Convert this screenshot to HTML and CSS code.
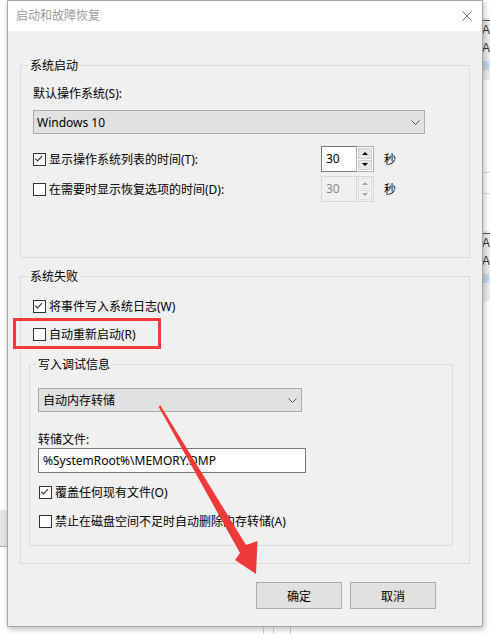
FILE: index.html
```html
<!DOCTYPE html>
<html>
<head>
  <meta charset="UTF-8">
  <title>启动和故障恢复</title>
  <link rel="stylesheet" href="styles.css">
</head>
<body>

<div class="desktop">

  <!-- 左側：背後視窗的一角 -->
  <div class="side-left">
    <div class="left-bar"></div>
  </div>

  <div class="center">
    <div class="dialog">
      <div class="titlebar">
        <span class="title">启动和故障恢复</span>
        <svg class="close" viewBox="0 0 10 10" width="10" height="10">
          <path d="M0.5 0.5 L9.5 9.5 M9.5 0.5 L0.5 9.5" stroke="#6b6b6b" stroke-width="1" fill="none"/>
        </svg>
      </div>

      <div class="dialog-body">

        <!-- 系统启动 -->
        <fieldset class="group group-boot">
          <legend>系统启动</legend>
          <div class="field-label">默认操作系统(S):</div>
          <div class="select select-os">
            <span>Windows 10</span>
            <svg class="chevron" viewBox="0 0 9 5" width="9" height="5"><path d="M0.5 0.5 L4.5 4.5 L8.5 0.5" stroke="#555" fill="none"/></svg>
          </div>

          <div class="timer-row first">
            <label class="check"><span class="box checked"><svg viewBox="0 0 13 13" width="11" height="11"><path d="M1.5 5.5 L4.2 8.2 L9.5 2.5" stroke="#333" stroke-width="1.3" fill="none"/></svg></span>显示操作系统列表的时间(T):</label>
            <div class="spin">
              <span class="spin-value">30</span>
              <span class="spin-btns">
                <span class="spin-btn"><i class="arrow-up"></i></span>
                <span class="spin-btn"><i class="arrow-down"></i></span>
              </span>
            </div>
            <span class="unit">秒</span>
          </div>

          <div class="timer-row">
            <label class="check"><span class="box"></span>在需要时显示恢复选项的时间(D):</label>
            <div class="spin disabled">
              <span class="spin-value">30</span>
              <span class="spin-btns">
                <span class="spin-btn"><i class="arrow-up"></i></span>
                <span class="spin-btn"><i class="arrow-down"></i></span>
              </span>
            </div>
            <span class="unit">秒</span>
          </div>
        </fieldset>

        <!-- 系统失败 -->
        <fieldset class="group group-fail">
          <legend>系统失败</legend>
          <label class="check row-log"><span class="box checked"><svg viewBox="0 0 13 13" width="11" height="11"><path d="M1.5 5.5 L4.2 8.2 L9.5 2.5" stroke="#333" stroke-width="1.3" fill="none"/></svg></span>将事件写入系统日志(W)</label>
          <label class="check row-restart"><span class="box"></span>自动重新启动(R)</label>

          <fieldset class="group group-debug">
            <legend>写入调试信息</legend>
            <div class="select select-dump">
              <span>自动内存转储</span>
              <svg class="chevron" viewBox="0 0 9 5" width="9" height="5"><path d="M0.5 0.5 L4.5 4.5 L8.5 0.5" stroke="#555" fill="none"/></svg>
            </div>
            <div class="field-label dump-label">转储文件:</div>
            <div class="textbox">%SystemRoot%\MEMORY.DMP</div>
            <label class="check row-overwrite"><span class="box checked"><svg viewBox="0 0 13 13" width="11" height="11"><path d="M1.5 5.5 L4.2 8.2 L9.5 2.5" stroke="#333" stroke-width="1.3" fill="none"/></svg></span>覆盖任何现有文件(O)</label>
            <label class="check row-lowdisk"><span class="box"></span>禁止在磁盘空间不足时自动删除内存转储(A)</label>
          </fieldset>
        </fieldset>

        <div class="buttons">
          <button class="btn">确定</button>
          <button class="btn">取消</button>
        </div>
      </div>
    </div>

    <!-- 對話框下方露出的背景 -->
    <div class="under">
      <span class="vline"></span>
      <span class="vline pink"></span>
      <span class="vline"></span>
    </div>
  </div>

  <!-- 右側：背後視窗的工具列 -->
  <div class="side-right">
    <div class="tool-strip">
      <span class="glyph boxed">A</span>
      <span class="glyph">A</span>
      <span class="glyph-icon"></span>
    </div>
    <div class="hline line-a"></div>
    <div class="hline line-b"></div>
    <div class="tool-strip second">
      <span class="glyph boxed">A</span>
      <span class="glyph">A</span>
      <span class="glyph-icon"></span>
    </div>
  </div>

  <!-- 標註：紅框與箭頭 -->
  <div class="mark-box"></div>
  <svg class="mark-arrow" viewBox="0 0 490 634" width="490" height="634">
    <polygon points="158.5,406.5 160.5,405.5 246,545 257.5,541 256,574 235,560 240,553" fill="#ef3a3a"/>
  </svg>

</div>

</body>
</html>
```

FILE: styles.css
```css
body {
  margin: 0;
  font-family: "Noto Sans", "Noto Sans CJK SC", sans-serif;
  font-size: 12px;
  color: #000;
  background: #fff;
}

.desktop {
  position: relative;
  display: flex;
  width: 490px;
  height: 634px;
  overflow: hidden;
  background: #fff;
}

/* 背景 */
.side-left {
  width: 7px;
  flex: none;
}
.left-bar {
  margin-top: 510px;
  height: 36px;
  background: #e6e6e6;
  border-bottom: 1px solid #b0b0b0;
}
.side-right {
  width: 7px;
  flex: none;
  padding-top: 18px;
}
.tool-strip {
  height: 62px;
  background: #ececec;
  display: flex;
  flex-direction: column;
  padding-top: 2px;
  box-sizing: border-box;
}
.tool-strip.second {
  margin-top: 37px;
  height: 70px;
}
.glyph {
  font-family: "Liberation Sans", sans-serif;
  font-size: 12px;
  line-height: 18px;
  height: 18px;
  color: #333;
  margin-left: -1px;
}
.glyph.boxed {
  border-top: 1px solid #555;
}
.glyph-icon {
  margin-top: 4px;
  width: 6px;
  height: 9px;
  background: #c6d6ea;
}
.hline {
  height: 1px;
  background: #d9d9d9;
}
.line-a {
  margin-top: 92px;
}
.line-b {
  margin-top: 20px;
}

.center {
  width: 476px;
  flex: none;
  display: flex;
  flex-direction: column;
}
.under {
  flex: 1;
  display: flex;
  padding-left: 256px;
}
.vline {
  width: 1px;
  background: #cfcfcf;
  margin-right: 9px;
}
.vline.pink {
  background: #e7c9cc;
  margin-right: 16px;
}

/* 對話框 */
.dialog {
  position: relative;
  z-index: 1;
  box-sizing: border-box;
  height: 627px;
  border: 1px solid #a8a8a8;
  background: #f0f0f0;
  box-shadow: 1px 2px 6px rgba(0, 0, 0, 0.28);
}
.titlebar {
  height: 30px;
  background: #fff;
  display: flex;
  align-items: center;
  justify-content: space-between;
  padding: 0 10px 0 8px;
}
.title {
  color: #9a9a9a;
  line-height: 16px;
}
.close {
  display: block;
}

.dialog-body {
  padding: 28px 12px 0;
  display: flex;
  flex-direction: column;
}

.group {
  margin: 0;
  min-width: 0;
  border: 1px solid #dcdcdc;
  padding: 0 12px 55px;
}
.group legend {
  padding: 0 2px;
  margin-left: -5px;
  line-height: 13px;
}
.field-label {
  line-height: 16px;
}
.group-boot .field-label {
  margin-top: 14px;
}

.select {
  box-sizing: border-box;
  height: 24px;
  border: 1px solid #adadad;
  background: #e1e1e1;
  display: flex;
  align-items: center;
  justify-content: space-between;
  padding: 0 4px 0 3px;
  margin-top: 8px;
}
.select-os {
  width: 392px;
}
.select-dump {
  width: 264px;
  margin-top: 17px;
  padding-left: 4px;
}

/* 勾選框 */
.check {
  display: flex;
  align-items: center;
  gap: 3px;
  line-height: 13px;
  cursor: pointer;
}
.box {
  box-sizing: border-box;
  width: 13px;
  height: 13px;
  border: 1px solid #333;
  background: #fff;
  display: flex;
  align-items: center;
  justify-content: center;
  flex: none;
}
.box svg {
  display: block;
}

.timer-row {
  display: grid;
  grid-template-columns: 278px 53px auto;
  column-gap: 10px;
  align-items: center;
  margin-top: 4px;
}
.timer-row.first {
  margin-top: 12px;
}
.spin {
  display: flex;
  height: 26px;
}
.spin-value {
  box-sizing: border-box;
  width: 35px;
  border: 1px solid #7a7a7a;
  border-right: none;
  background: #fff;
  padding-left: 4px;
  line-height: 24px;
}
.spin-btns {
  box-sizing: border-box;
  width: 18px;
  border: 1px solid #b0b0b0;
  display: flex;
  flex-direction: column;
  background: #fff;
}
.spin-btn {
  flex: 1;
  margin: 1px 1px 0;
  border: 1px solid #cfcfcf;
  background: #e6e6e6;
  display: flex;
  align-items: center;
  justify-content: center;
}
.spin-btn + .spin-btn {
  margin-bottom: 1px;
}
.arrow-up,
.arrow-down {
  width: 0;
  height: 0;
  border-left: 3px solid transparent;
  border-right: 3px solid transparent;
}
.arrow-up {
  border-bottom: 3px solid #000;
}
.arrow-down {
  border-top: 3px solid #000;
}
.spin.disabled .spin-value {
  background: #f0f0f0;
  border-color: #d6d6d6;
  color: #8a8a8a;
}
.spin.disabled .spin-btns {
  border-color: #d6d6d6;
  background: #f0f0f0;
}
.spin.disabled .spin-btn {
  background: #f0f0f0;
  border-color: #e0e0e0;
}
.spin.disabled .arrow-up {
  border-bottom-color: #a3a3a3;
}
.spin.disabled .arrow-down {
  border-top-color: #a3a3a3;
}

/* 系统失败 */
.group-fail {
  margin-top: 12px;
  padding: 17px 0 17px 8px;
}
.group-fail > legend {
  margin-left: -1px;
}
.group-fail > .check {
  margin-left: 4px;
}
.row-restart {
  margin-top: 15px;
}
.group-debug {
  width: 424px;
  box-sizing: border-box;
  margin-top: 17px;
  padding: 0 0 17px 8px;
}
.group-debug legend {
  margin-left: -2px;
}
.dump-label {
  margin-top: 20px;
}
.textbox {
  box-sizing: border-box;
  width: 268px;
  height: 25px;
  border: 1px solid #7a7a7a;
  background: #fff;
  padding-left: 4px;
  line-height: 23px;
}
.group-debug .check {
  margin-left: 1px;
}
.row-overwrite {
  margin-top: 13px;
}
.row-lowdisk {
  margin-top: 16px;
}

.buttons {
  display: flex;
  justify-content: flex-end;
  gap: 8px;
  margin-top: 18px;
  padding-right: 34px;
}
.btn {
  box-sizing: border-box;
  width: 86px;
  height: 27px;
  border: 1px solid #adadad;
  background: #e1e1e1;
  font-family: inherit;
  font-size: 12px;
  color: #000;
  padding: 0;
}

/* 標註 */
.mark-box {
  position: absolute;
  left: 13px;
  top: 318px;
  width: 148px;
  height: 31px;
  box-sizing: border-box;
  border: 3px solid #f03a3c;
  z-index: 2;
}
.mark-arrow {
  position: absolute;
  left: 0;
  top: 0;
  z-index: 2;
  pointer-events: none;
}
```
